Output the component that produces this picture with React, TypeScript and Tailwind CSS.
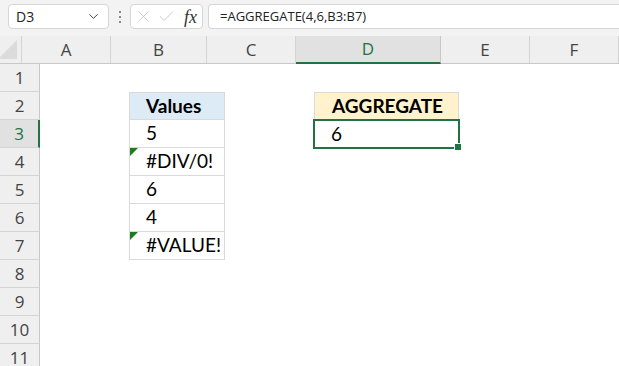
import { ChevronDown, X, Check } from "lucide-react";

const cols = [
  { name: "A", w: 89 },
  { name: "B", w: 96 },
  { name: "C", w: 89 },
  { name: "D", w: 145 },
  { name: "E", w: 89 },
  { name: "F", w: 89 },
];

const rows = [1, 2, 3, 4, 5, 6, 7, 8, 9, 10, 11];

const values = ["5", "#DIV/0!", "6", "4", "#VALUE!"];

function Cell({ r, c }: { r: number; c: string }) {
  const base = "h-[28px] relative";
  if (c === "B" && r === 2) {
    return (
      <div className={`${base} bg-[#ddebf7] border-l border-t border-r border-b border-[#d9d9d9] pl-[16px] flex items-center font-bold text-[19px]`}>
        Values
      </div>
    );
  }
  if (c === "B" && r >= 3 && r <= 7) {
    const v = values[r - 3];
    const err = v.startsWith("#");
    return (
      <div className={`${base} border-l border-r border-b border-[#d9d9d9] pl-[16px] flex items-center text-[19px]`}>
        {err && (
          <span className="absolute left-0 top-0 w-0 h-0 border-t-[8px] border-t-[#1e7b1e] border-r-[8px] border-r-transparent" />
        )}
        {v}
      </div>
    );
  }
  if (c === "D" && r === 2) {
    return (
      <div className={`${base} bg-[#fff2cc] border-l border-t border-r border-[#d9d9d9] pl-[17px] flex items-center font-bold text-[19px]`}>
        AGGREGATE
      </div>
    );
  }
  if (c === "D" && r === 3) {
    return (
      <div className={`${base} border-2 border-[#217346] pl-[16px] flex items-center text-[19px] -ml-px -mt-px h-[30px] w-[147px]`}>
        6
        <span className="absolute -right-[4px] -bottom-[4px] w-[6px] h-[6px] bg-[#217346] border border-white box-content" />
      </div>
    );
  }
  return <div className={base} />;
}

export default function App() {
  return (
    <div className="w-[619px] h-[366px] overflow-hidden bg-white" style={{ fontFamily: "Lato, 'Open Sans', sans-serif" }}>
      {/* formula bar */}
      <div className="h-[36px] bg-[#f3f3f3] flex items-start pt-[4px] pl-[8px] font-['Open_Sans',sans-serif] text-[#222]">
        <div className="w-[101px] h-[25px] bg-white border border-[#d6d6d6] rounded-[4px] flex items-center justify-between pl-[7px] pr-[7px] text-[14px]">
          <span>D3</span>
          <ChevronDown size={15} strokeWidth={1.6} className="text-[#444]" />
        </div>
        <div className="flex flex-col gap-[3px] pt-[7px] ml-[10px] mr-[9px]">
          <span className="w-[2px] h-[2px] bg-[#888]" />
          <span className="w-[2px] h-[2px] bg-[#888]" />
          <span className="w-[2px] h-[2px] bg-[#888]" />
        </div>
        <div className="w-[73px] h-[25px] bg-white border border-[#d6d6d6] rounded-[4px] flex items-center pl-[3px] gap-[4px]">
          <X size={19} strokeWidth={1} className="text-[#bdbdbd]" />
          <Check size={19} strokeWidth={1} className="text-[#bdbdbd]" />
          <span className="ml-[4px] text-[18px] italic text-[#333] font-['Liberation_Serif',serif] leading-none">fx</span>
        </div>
        <div className="flex-1 ml-[5px] h-[25px] bg-white border border-[#d6d6d6] rounded-l-[4px] border-r-0 flex items-center pl-[11px] text-[13px]">
          =AGGREGATE(4,6,B3:B7)
        </div>
      </div>

      {/* column headers */}
      <div className="flex h-[28px] bg-[#efefef] border-b border-[#c8c8c8] font-['Open_Sans',sans-serif] text-[17px] text-[#444]">
        <div className="w-[40px] relative border-r border-[#d4d4d4]">
          <span className="absolute right-[4px] bottom-[4px] w-0 h-0 border-l-[19px] border-l-transparent border-b-[19px] border-b-[#dbdbdb]" />
        </div>
        {cols.map((c) => (
          <div
            key={c.name}
            style={{ width: c.w }}
            className={
              c.name === "D"
                ? "shrink-0 flex items-center justify-center bg-[#e1e1e1] border-r border-[#c8c8c8] border-b-2 border-b-[#217346] text-[#217346] -mb-px"
                : "shrink-0 flex items-center justify-center border-r border-[#d4d4d4]"
            }
          >
            {c.name}
          </div>
        ))}
      </div>

      {/* rows */}
      {rows.map((r) => (
        <div key={r} className="flex h-[28px]">
          <div
            className={
              r === 3
                ? "w-[40px] shrink-0 flex items-center justify-center bg-[#e1e1e1] border-r-2 border-[#217346] border-b border-b-[#d4d4d4] text-[#217346] text-[17px] font-['Open_Sans',sans-serif]"
                : "w-[40px] shrink-0 flex items-center justify-center bg-[#efefef] border-r border-[#c8c8c8] border-b border-b-[#d4d4d4] text-[#444] text-[17px] font-['Open_Sans',sans-serif]"
            }
          >
            {r}
          </div>
          {cols.map((c) => (
            <div key={c.name} style={{ width: c.w }} className="shrink-0">
              <Cell r={r} c={c.name} />
            </div>
          ))}
        </div>
      ))}
    </div>
  );
}
